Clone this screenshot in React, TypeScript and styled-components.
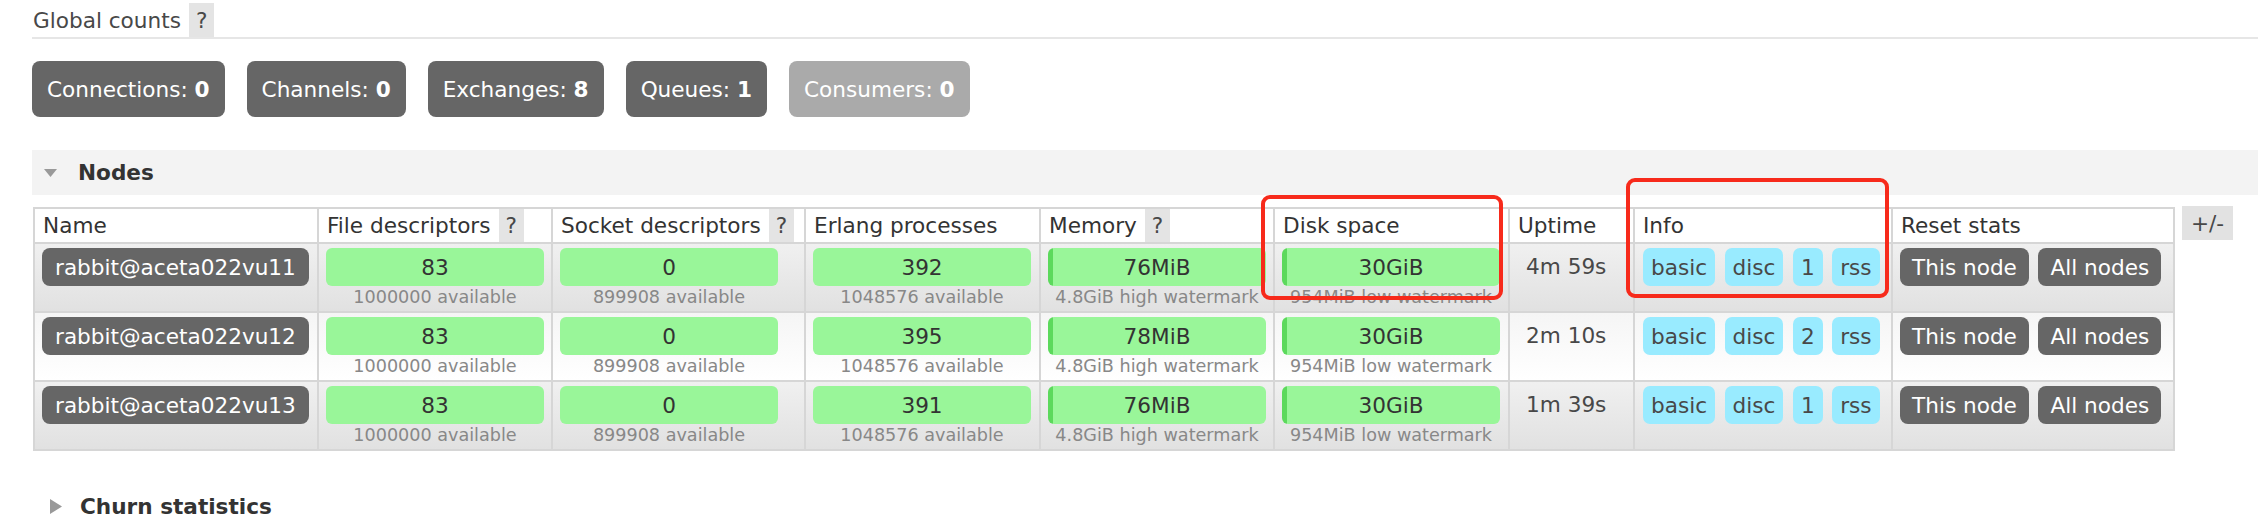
import React from "react";
import styled, { createGlobalStyle } from "styled-components";

const GlobalStyle = createGlobalStyle`
  html, body { margin: 0; padding: 0; background: #fff; }
  body {
    font-family: "DejaVu Sans", Verdana, sans-serif;
    font-size: 21.6px;
    color: #484848;
  }
  * { box-sizing: border-box; }
`;

const Page = styled.div`
  position: relative;
  width: 2258px;
  height: 520px;
  overflow: hidden;
  padding: 3px 0 0 32px;
`;

const CountsHeading = styled.div`
  display: flex;
  align-items: stretch;
  height: 36px;
  padding-left: 1px;
  border-bottom: 2px solid #e6e6e6;
`;

const HeadingText = styled.span`
  display: flex;
  align-items: center;
`;

const Help = styled.span<{ $gap?: number }>`
  display: flex;
  align-items: center;
  align-self: stretch;
  margin-left: ${(p) => p.$gap ?? 8}px;
  padding: 0 7px;
  background: #e4e4e4;
  color: #484848;
  font-weight: normal;
`;

const CountRow = styled.div`
  display: flex;
  gap: 22px;
  margin-top: 22px;
`;

const CountButton = styled.div<{ $muted?: boolean }>`
  display: flex;
  align-items: center;
  height: 56px;
  padding: 0 15px;
  border-radius: 8px;
  background: ${(p) => (p.$muted ? "#aaaaaa" : "#666666")};
  color: #fff;
  white-space: pre;
`;

const Num = styled.b`
  font-weight: bold;
`;

const SectionHeader = styled.div<{ $open?: boolean; $top: number }>`
  display: flex;
  align-items: center;
  height: 45px;
  margin-top: ${(p) => p.$top}px;
  background: ${(p) => (p.$open ? "#f3f3f3" : "transparent")};
  font-weight: bold;
  color: #333;
`;

const Arrow = styled.svg<{ $left: number; $right: number }>`
  flex: none;
  margin-left: ${(p) => p.$left}px;
  margin-right: ${(p) => p.$right}px;
`;

const TableWrap = styled.div`
  display: flex;
  align-items: flex-start;
  gap: 7px;
  margin-top: 12px;
  margin-left: 1px;
`;

const Grid = styled.div`
  display: grid;
  grid-template-columns: 282px 232px 251px 233px 232px 233px 123px 256px 280px;
  gap: 2px;
  padding: 2px;
  background: #d6d6d6;
`;

const HeadCell = styled.div`
  display: flex;
  align-items: center;
  height: 33px;
  padding: 0 8px;
  background: #fff;
  color: #333;
  white-space: nowrap;
`;

const Cell = styled.div<{ $alt?: boolean; $padLeft?: number }>`
  height: 67px;
  padding: 4px 7px 3px ${(p) => p.$padLeft ?? 7}px;
  background: ${(p) =>
    p.$alt
      ? "linear-gradient(#f5f5f5, #ffffff)"
      : "linear-gradient(#f0f0f0, #e1e1e1)"};
  white-space: nowrap;
`;

const NodeName = styled.div`
  display: inline-flex;
  align-items: center;
  height: 38px;
  padding: 0 13px;
  border-radius: 8px;
  background: #666;
  color: #fff;
`;

const Meter = styled.div`
  display: flex;
  flex-direction: column;
  width: 218px;
`;

const Bar = styled.div<{ $used?: number }>`
  display: flex;
  align-items: center;
  justify-content: center;
  height: 38px;
  border-radius: 6px;
  color: #333;
  background: ${(p) =>
    p.$used
      ? `linear-gradient(to right, #5cd95c 0 ${p.$used}px, #99f699 ${p.$used}px)`
      : "#99f699"};
`;

const Sub = styled.div`
  font-size: 17.6px;
  line-height: 22px;
  color: #888;
  text-align: center;
`;

const PlainValue = styled.div`
  height: 38px;
  line-height: 38px;
  color: #484848;
`;

const Chips = styled.div`
  display: flex;
  gap: 9.5px;
`;

const Badge = styled.div`
  display: flex;
  align-items: center;
  height: 38px;
  padding: 0 8px;
  border-radius: 7px;
  background: #99ebff;
  color: #484848;
`;

const ResetButton = styled.div`
  display: flex;
  align-items: center;
  height: 38px;
  padding: 0 12px;
  border-radius: 8px;
  background: #666;
  color: #fff;
`;

const PlusMinus = styled.div`
  display: flex;
  align-items: center;
  justify-content: center;
  width: 51px;
  height: 34px;
  margin-top: -1px;
  background: #e2e2e2;
  color: #484848;
`;

const Highlight = styled.div<{ $x: number; $y: number; $w: number; $h: number }>`
  position: absolute;
  left: ${(p) => p.$x}px;
  top: ${(p) => p.$y}px;
  width: ${(p) => p.$w}px;
  height: ${(p) => p.$h}px;
  border: 4px solid #f72a1b;
  border-radius: 9px;
  pointer-events: none;
`;

type NodeRow = {
  name: string;
  fd: string;
  sock: string;
  proc: string;
  mem: string;
  disk: string;
  uptime: string;
  ver: string;
};

const nodes: NodeRow[] = [
  { name: "rabbit@aceta022vu11", fd: "83", sock: "0", proc: "392", mem: "76MiB", disk: "30GiB", uptime: "4m 59s", ver: "1" },
  { name: "rabbit@aceta022vu12", fd: "83", sock: "0", proc: "395", mem: "78MiB", disk: "30GiB", uptime: "2m 10s", ver: "2" },
  { name: "rabbit@aceta022vu13", fd: "83", sock: "0", proc: "391", mem: "76MiB", disk: "30GiB", uptime: "1m 39s", ver: "1" },
];

const counts = [
  { label: "Connections", value: "0" },
  { label: "Channels", value: "0" },
  { label: "Exchanges", value: "8" },
  { label: "Queues", value: "1" },
  { label: "Consumers", value: "0", muted: true },
];

export default function App() {
  return (
    <>
      <GlobalStyle />
      <Page>
        <CountsHeading>
          <HeadingText>Global counts</HeadingText>
          <Help $gap={8}>?</Help>
        </CountsHeading>

        <CountRow>
          {counts.map((c) => (
            <CountButton key={c.label} $muted={c.muted}>
              {c.label}: <Num>{c.value}</Num>
            </CountButton>
          ))}
        </CountRow>

        <SectionHeader $open $top={33}>
          <Arrow $left={12} $right={21} width="13" height="8" viewBox="0 0 13 8">
            <polygon points="0,0 13,0 6.5,8" fill="#999" />
          </Arrow>
          Nodes
        </SectionHeader>

        <TableWrap>
          <Grid>
            <HeadCell>Name</HeadCell>
            <HeadCell>
              File descriptors<Help>?</Help>
            </HeadCell>
            <HeadCell>
              Socket descriptors<Help>?</Help>
            </HeadCell>
            <HeadCell>Erlang processes</HeadCell>
            <HeadCell>
              Memory<Help>?</Help>
            </HeadCell>
            <HeadCell>Disk space</HeadCell>
            <HeadCell>Uptime</HeadCell>
            <HeadCell>Info</HeadCell>
            <HeadCell>Reset stats</HeadCell>

            {nodes.map((n, i) => {
              const alt = i % 2 === 1;
              return (
                <React.Fragment key={n.name}>
                  <Cell $alt={alt}>
                    <NodeName>{n.name}</NodeName>
                  </Cell>
                  <Cell $alt={alt}>
                    <Meter>
                      <Bar>{n.fd}</Bar>
                      <Sub>1000000 available</Sub>
                    </Meter>
                  </Cell>
                  <Cell $alt={alt}>
                    <Meter>
                      <Bar>{n.sock}</Bar>
                      <Sub>899908 available</Sub>
                    </Meter>
                  </Cell>
                  <Cell $alt={alt}>
                    <Meter>
                      <Bar>{n.proc}</Bar>
                      <Sub>1048576 available</Sub>
                    </Meter>
                  </Cell>
                  <Cell $alt={alt}>
                    <Meter>
                      <Bar $used={5}>{n.mem}</Bar>
                      <Sub>4.8GiB high watermark</Sub>
                    </Meter>
                  </Cell>
                  <Cell $alt={alt}>
                    <Meter>
                      <Bar $used={5}>{n.disk}</Bar>
                      <Sub>954MiB low watermark</Sub>
                    </Meter>
                  </Cell>
                  <Cell $alt={alt} $padLeft={16}>
                    <PlainValue>{n.uptime}</PlainValue>
                  </Cell>
                  <Cell $alt={alt} $padLeft={8}>
                    <Chips>
                      <Badge>basic</Badge>
                      <Badge>disc</Badge>
                      <Badge>{n.ver}</Badge>
                      <Badge>rss</Badge>
                    </Chips>
                  </Cell>
                  <Cell $alt={alt}>
                    <Chips>
                      <ResetButton>This node</ResetButton>
                      <ResetButton>All nodes</ResetButton>
                    </Chips>
                  </Cell>
                </React.Fragment>
              );
            })}
          </Grid>
          <PlusMinus>+/-</PlusMinus>
        </TableWrap>

        <SectionHeader $top={33}>
          <Arrow $left={18} $right={18} width="12" height="15" viewBox="0 0 12 15">
            <polygon points="0,0 12,7.5 0,15" fill="#999" />
          </Arrow>
          Churn statistics
        </SectionHeader>

        <Highlight $x={1261} $y={195} $w={242} $h={105} />
        <Highlight $x={1626} $y={178} $w={263} $h={120} />
      </Page>
    </>
  );
}
